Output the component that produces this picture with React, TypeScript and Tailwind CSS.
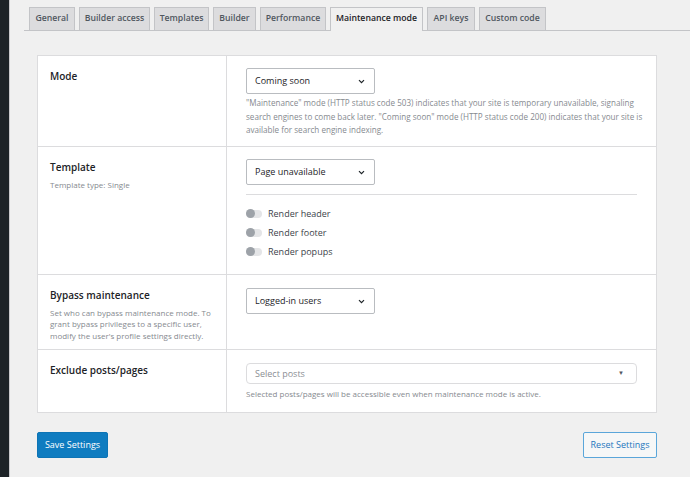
import { ReactNode } from "react";

const tabs = [
  { label: "General", width: "w-[46px]" },
  { label: "Builder access", width: "w-[71px]" },
  { label: "Templates", width: "w-[55px]" },
  { label: "Builder", width: "w-[43px]" },
  { label: "Performance", width: "w-[66px]" },
  { label: "Maintenance mode", width: "w-[93px]", active: true },
  { label: "API keys", width: "w-[48px]" },
  { label: "Custom code", width: "w-[67px]" },
];

function Chevron() {
  return (
    <svg width="7" height="5" viewBox="0 0 7 5" fill="none">
      <path d="M1 1.2L3.5 3.7L6 1.2" stroke="#1d2327" strokeWidth="1.2" />
    </svg>
  );
}

function Select({ value }: { value: string }) {
  return (
    <div className="flex h-[26px] w-[129px] items-center justify-between rounded-[2px] border border-[#b9bcc0] bg-white pl-[8px] pr-[9px] text-[9px] text-[#1d2327]">
      <span>{value}</span>
      <Chevron />
    </div>
  );
}

function Toggle({ label }: { label: string }) {
  return (
    <div className="flex h-[19px] items-center gap-[6px]">
      <div className="relative h-[8px] w-[16px] rounded-full bg-[#e4e5e7]">
        <div className="absolute -top-[0.5px] left-0 h-[9px] w-[9px] rounded-full bg-[#9da2a8]" />
      </div>
      <span className="text-[9px] text-[#3c434a]">{label}</span>
    </div>
  );
}

function Row({
  height,
  label,
  desc,
  children,
  last,
}: {
  height: string;
  label: string;
  desc?: ReactNode;
  children: ReactNode;
  last?: boolean;
}) {
  return (
    <div className={`flex ${height} ${last ? "" : "border-b border-[#dcdcde]"}`}>
      <div className="w-[189px] shrink-0 border-r border-[#dcdcde] pl-[12px] pr-[14px] pt-[13px]">
        <div className="text-[10px] font-semibold leading-[14px] text-[#1d2327]">{label}</div>
        {desc && (
          <div className="mt-[5px] text-[8px] leading-[11.3px] text-[#868a8f]">{desc}</div>
        )}
      </div>
      <div className="flex-1 pl-[19px] pr-[19px] pt-[12px]">{children}</div>
    </div>
  );
}

export default function App() {
  return (
    <div className="flex h-[477px] w-[690px] overflow-hidden bg-[#f0f0f0] font-['Open_Sans',sans-serif]">
      <div className="w-[9px] shrink-0 bg-[#1d2327]" />
      <div className="w-px shrink-0 bg-[#c9cacc]" />

      <div className="flex-1">
        <div className="ml-[14px] mt-[7px] flex items-start gap-[4px] border-b border-[#c3c4c7] pl-[5px]">
          {tabs.map((tab) => (
            <div
              key={tab.label}
              className={`flex shrink-0 items-center justify-center border border-b-0 border-[#c3c4c7] text-[8.7px] font-semibold ${tab.width} ${
                tab.active
                  ? "-mb-px h-[24px] bg-[#f0f0f0] pb-px text-[#1d2327]"
                  : "h-[23px] bg-[#dcdcde] text-[#50575e]"
              }`}
            >
              {tab.label}
            </div>
          ))}
        </div>

        <div className="ml-[27px] mt-[24px] w-[620px] border border-[#dcdcde] bg-white">
          <Row height="h-[91px]" label="Mode">
            <Select value="Coming soon" />
            <div className="mt-[2px] whitespace-nowrap text-[8.1px] leading-[13.5px] text-[#868a8f]">
              <p>"Maintenance" mode (HTTP status code 503) indicates that your site is temporary unavailable, signaling</p>
              <p>search engines to come back later. "Coming soon" mode (HTTP status code 200) indicates that your site is</p>
              <p>available for search engine indexing.</p>
            </div>
          </Row>

          <Row height="h-[128px]" label="Template" desc="Template type: Single">
            <Select value="Page unavailable" />
            <div className="mt-[9px] h-px w-full bg-[#dcdcde]" />
            <div className="mt-[9px] flex flex-col">
              <Toggle label="Render header" />
              <Toggle label="Render footer" />
              <Toggle label="Render popups" />
            </div>
          </Row>

          <Row
            height="h-[75px]"
            label="Bypass maintenance"
            desc={
              <>
                Set who can bypass maintenance mode. To
                <br />
                grant bypass privileges to a specific user,
                <br />
                modify the user's profile settings directly.
              </>
            }
          >
            <div className="pt-px">
              <Select value="Logged-in users" />
            </div>
          </Row>

          <Row height="h-[62px]" label="Exclude posts/pages" last>
            <div className="pt-[1px]">
              <div className="flex h-[21px] items-center justify-between rounded-[4px] border border-[#dcdcde] bg-white pl-[8px] pr-[12px] text-[9px] text-[#8c8f94]">
                <span>Select posts</span>
                <span className="text-[6px] text-[#50575e]">▼</span>
              </div>
              <p className="mt-[4px] text-[8px] leading-[11px] text-[#868a8f]">
                Selected posts/pages will be accessible even when maintenance mode is active.
              </p>
            </div>
          </Row>
        </div>

        <div className="ml-[27px] mt-[19px] flex w-[620px] justify-between">
          <button className="h-[26px] w-[71px] rounded-[2px] border border-[#0d74b5] bg-[#0f7cc0] text-[9px] text-white">
            Save Settings
          </button>
          <button className="h-[26px] w-[74px] rounded-[2px] border border-[#5aa6da] bg-[#f6f7f7] text-[9px] text-[#1d76bd]">
            Reset Settings
          </button>
        </div>
      </div>
    </div>
  );
}
